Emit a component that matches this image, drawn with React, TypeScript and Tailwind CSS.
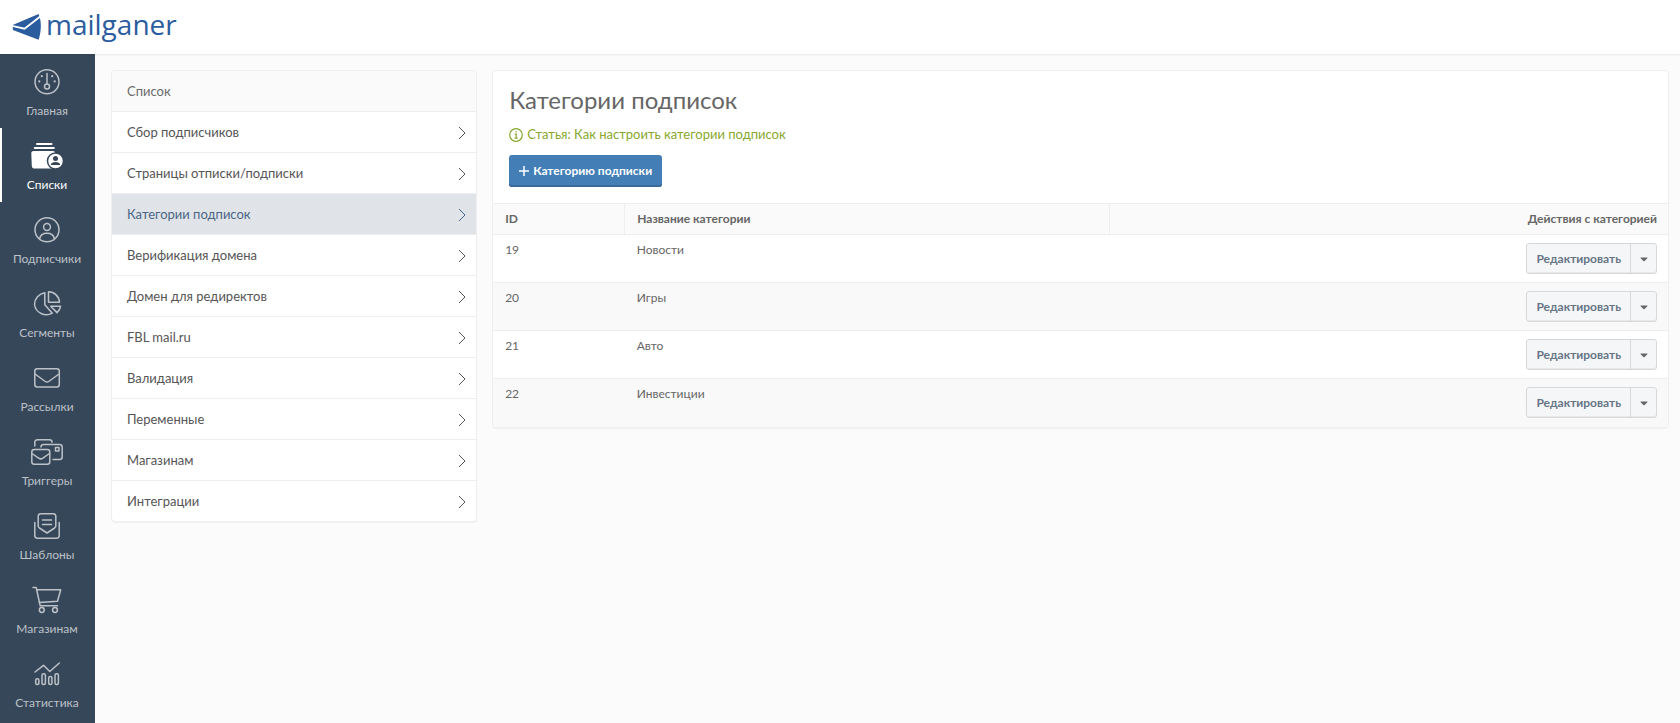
import React from 'react';
import { FaCaretDown } from 'react-icons/fa';

interface NavItem {
  label: string;
  icon: React.ReactNode;
  active?: boolean;
}

const navItems: NavItem[] = [
  {
    label: 'Главная',
    icon: (
      <>
        <circle cx="16" cy="15.7" r="12" />
        <path d="M16 7.5v10.3" />
        <circle cx="16" cy="20.4" r="2.5" />
        <g fill="currentColor" stroke="none">
          <circle cx="8.3" cy="15.4" r="1.1" />
          <circle cx="10.8" cy="10.2" r="1.1" />
          <circle cx="21.2" cy="10.2" r="1.1" />
          <circle cx="23.7" cy="15.4" r="1.1" />
        </g>
      </>
    ),
  },
  {
    label: 'Списки',
    active: true,
    icon: (
      <>
        <path d="M6 4h14.5M3.8 8h19" strokeWidth="2" />
        <path
          d="M2.5 11h19.5c1.2 0 2 .8 2 2v13.5c0 1.2-.8 2-2 2H4c-2 0-3-.8-3.2-2.6L.3 13.5c-.1-1.5.7-2.5 2.2-2.5z"
          fill="currentColor"
          stroke="none"
        />
        <circle cx="24.5" cy="21" r="8" fill="currentColor" stroke="#37475a" strokeWidth="1.5" />
        <g fill="#37475a" stroke="none">
          <circle cx="24.5" cy="18.6" r="2.5" />
          <path d="M19.7 25c.5-2.3 2.300-3 4.800-3s4.300.7 4.800 3z" />
        </g>
      </>
    ),
  },
  {
    label: 'Подписчики',
    icon: (
      <>
        <circle cx="16" cy="15.7" r="12" />
        <circle cx="16" cy="13" r="3.4" />
        <path d="M8.7 24.5c.6-3.4 3.3-5.3 7.3-5.3s6.7 1.9 7.3 5.3" />
      </>
    ),
  },
  {
    label: 'Сегменты',
    icon: (
      <>
        <path d="M13.8 4.8v12l7.500 8.400A12 12 0 0 1 3.500 16.500 12 12 0 0 1 13.800 4.800z" />
        <path d="M17.5 3.8v10.500h11A11 11 0 0 0 17.500 3.800z" />
        <path d="M19.7 18.3h9.800c-.3 2.500-1.500 4.600-3.500 6.300z" />
      </>
    ),
  },
  {
    label: 'Рассылки',
    icon: (
      <>
        <rect x="3.8" y="6.7" width="24.5" height="18.3" rx="2.5" />
        <path d="M4 12l10.3 7.5c1.2.8 2.2.8 3.4 0L28 12" />
      </>
    ),
  },
  {
    label: 'Триггеры',
    icon: (
      <>
        <path d="M3.8 10V6.5c0-1.7 1-2.7 2.7-2.7h12c1.5 0 2.5.9 2.5 2.5" />
        <path d="M10 11c0-1.7 1-2.5 2.5-2.5h16c1.7 0 2.7 1 2.7 2.5v10c0 1.7-1 2.5-2.7 2.5H22" />
        <rect x="24.5" y="11.5" width="3.5" height="3.5" />
        <rect x=".8" y="13.5" width="18" height="14.7" rx="2.5" />
        <path d="M1 17.5l7 4.8c1.2.8 2.3.8 3.5 0l7-4.8" />
      </>
    ),
  },
  {
    label: 'Шаблоны',
    icon: (
      <>
        <path d="M3.8 12.5v13c0 1.7 1 2.7 2.7 2.7h19c1.7 0 2.7-1 2.7-2.7v-13" />
        <path d="M7.2 6.3c0-1.7 1-2.6 2.6-2.6h12.4c1.6 0 2.6.9 2.6 2.6v9.4c0 1-.4 1.7-1.2 2.3L16 23l-7.6-5c-.8-.6-1.2-1.3-1.2-2.3z" />
        <path d="M11.5 10h9M11.5 14.5h9" />
      </>
    ),
  },
  {
    label: 'Магазинам',
    icon: (
      <>
        <path d="M2 3.5h3.2l4 18.3h17.3" />
        <path d="M5.7 5.8h24l-3.2 11.5L8.3 18.5" />
        <circle cx="10.8" cy="26" r="2.4" />
        <circle cx="24" cy="26" r="2.4" />
      </>
    ),
  },
  {
    label: 'Статистика',
    icon: (
      <>
        <path d="M4 14l8.5-6.7 6.3 6.2L28.3 5" />
        <rect x="4.7" y="20.7" width="3.2" height="5.8" rx="1.5" />
        <rect x="11" y="15.7" width="3.4" height="10.8" rx="1.5" />
        <rect x="17.7" y="18.5" width="3.2" height="8" rx="1.5" />
        <rect x="24" y="15.7" width="3.4" height="10.8" rx="1.5" />
      </>
    ),
  },
];

const menuItems = [
  'Сбор подписчиков',
  'Страницы отписки/подписки',
  'Категории подписок',
  'Верификация домена',
  'Домен для редиректов',
  'FBL mail.ru',
  'Валидация',
  'Переменные',
  'Магазинам',
  'Интеграции',
];

const categories = [
  { id: 19, name: 'Новости' },
  { id: 20, name: 'Игры' },
  { id: 21, name: 'Авто' },
  { id: 22, name: 'Инвестиции' },
];

const activeMenuItem = 'Категории подписок';

function Logo() {
  return (
    <a href="#" className="flex items-center gap-1 text-[#2b5c9e]">
      <svg width="30" height="28" viewBox="0 0 30 28" aria-hidden="true">
        <path d="M.7 12L26.5 1c1.8 4 2.500 8.500 2.300 13-.1 4.500-.9 8.700-2.200 12.700L.9 17z" fill="currentColor" />
        <path d="M0 12.800l12.500 2.900L28.300 3.500" fill="none" stroke="#fff" strokeWidth="1.8" />
      </svg>
      <span className="pb-[6px] font-['Open_Sans',sans-serif] text-[28px] leading-8">mailganer</span>
    </a>
  );
}

function Sidebar() {
  return (
    <nav className="w-[95px] shrink-0 bg-[#37475a] pr-px">
      {navItems.map((item) => (
        <a
          key={item.label}
          href="#"
          className={`flex h-[74px] flex-col items-center gap-[5px] pt-3 text-xs leading-4 ${
            item.active ? 'text-white shadow-[inset_2px_0_0_#fff]' : 'text-[#bcc2c8]'
          }`}
        >
          <svg
            width="32"
            height="32"
            viewBox="0 0 32 32"
            fill="none"
            stroke="currentColor"
            strokeWidth="1.5"
            strokeLinecap="round"
            strokeLinejoin="round"
            className="shrink-0 overflow-visible"
            aria-hidden="true"
          >
            {item.icon}
          </svg>
          {item.label}
        </a>
      ))}
    </nav>
  );
}

function ListMenu() {
  return (
    <aside className="w-[23.5%] shrink-0 overflow-hidden rounded border border-[#eee] bg-white text-[13px] shadow-[0_1px_1px_rgba(0,0,0,0.04)]">
      <h2 className="flex h-[41px] items-center border-b border-[#eee] bg-[#fafafa] px-[15px] pt-px text-[#6a6a6a]">
        Список
      </h2>
      <ul>
        {menuItems.map((item) => (
          <li key={item} className="border-b border-[#eee] last:border-b-0">
            <a
              href="#"
              className={`flex h-10 items-center justify-between pt-px pr-[10px] pl-[15px] ${
                item === activeMenuItem ? 'bg-[#e0e4e9] text-[#4a6585]' : 'text-[#555]'
              }`}
            >
              {item}
              <svg width="8" height="14" viewBox="0 0 8 14" fill="none" stroke="currentColor" aria-hidden="true">
                <path d="M1 1l6 6-6 6" />
              </svg>
            </a>
          </li>
        ))}
      </ul>
    </aside>
  );
}

function CategoriesTable() {
  return (
    <table className="w-full table-fixed border-collapse text-left text-xs leading-5 text-[#666]">
      <thead>
        <tr className="h-[31px] border-y border-[#eee] bg-[#fafafa]">
          <th className="w-[11.2%] border-r border-[#eee] px-3 font-bold">ID</th>
          <th className="w-[41.3%] border-r border-[#eee] px-3 font-bold">Название категории</th>
          <th className="px-[11px] text-right font-bold">Действия с категорией</th>
        </tr>
      </thead>
      <tbody>
        {categories.map((category) => (
          <tr key={category.id} className="h-12 border-b border-[#eee] last:border-b-0 even:bg-[#f9f9f9]">
            <td className="px-3 pt-[5px] align-top">{category.id}</td>
            <td className="px-3 pt-[5px] align-top">{category.name}</td>
            <td className="px-[11px]">
              <div className="flex justify-end">
                <div className="flex h-[31px] rounded-[3px] border border-[#d5d9dc] bg-[#f5f6f7] shadow-[inset_0_-1px_0_rgba(0,0,0,0.05)]">
                  <button type="button" className="px-[9px] text-center font-bold text-[#667586]">
                    Редактировать
                  </button>
                  <button
                    type="button"
                    aria-label="Другие действия"
                    className="flex w-[26px] items-center justify-center border-l border-[#d5d9dc] text-[#666]"
                  >
                    <FaCaretDown size={12} />
                  </button>
                </div>
              </div>
            </td>
          </tr>
        ))}
      </tbody>
    </table>
  );
}

export default function App() {
  return (
    <div className="flex h-screen flex-col overflow-hidden bg-[#fbfbfb] font-['Lato','Noto_Sans',sans-serif]">
      <header className="relative flex h-[54px] shrink-0 items-center bg-white px-3 shadow-[0_1px_2px_rgba(0,0,0,0.08)]">
        <Logo />
      </header>

      <div className="flex min-h-0 flex-1">
        <Sidebar />
        <main className="flex min-w-0 flex-1 items-start gap-[15px] pt-4 pr-[11px] pl-4">
          <ListMenu />

          <section className="min-w-0 flex-1 overflow-hidden rounded border border-[#eee] bg-white shadow-[0_1px_1px_rgba(0,0,0,0.04)]">
            <div className="flex flex-col items-start px-4 pt-[11px] pb-4">
              <h1 className="text-2xl leading-9 text-[#666]">Категории подписок</h1>
              <a href="#" className="mt-[5px] flex h-6 items-center gap-1 text-[13px] text-[#88a82c]">
                <svg width="14" height="14" viewBox="0 0 14 14" fill="none" stroke="currentColor" strokeWidth="1.2" aria-hidden="true">
                  <circle cx="7" cy="7" r="6.3" />
                  <path d="M5.7 6.2h1.5v4M5.5 10.2h3.2M6.4 3.900h1.300" />
                </svg>
                Статья: Как настроить категории подписок
              </a>
              <button
                type="button"
                className="mt-2 flex h-8 items-center gap-1 rounded-[3px] bg-[#437eb6] px-[10px] text-xs font-bold text-white shadow-[inset_0_-2px_0_#386a99]"
              >
                <svg width="10" height="10" viewBox="0 0 10 10" stroke="currentColor" strokeWidth="1.5" aria-hidden="true">
                  <path d="M5 0v10M0 5h10" />
                </svg>
                Категорию подписки
              </button>
            </div>
            <CategoriesTable />
          </section>
        </main>
      </div>
    </div>
  );
}
